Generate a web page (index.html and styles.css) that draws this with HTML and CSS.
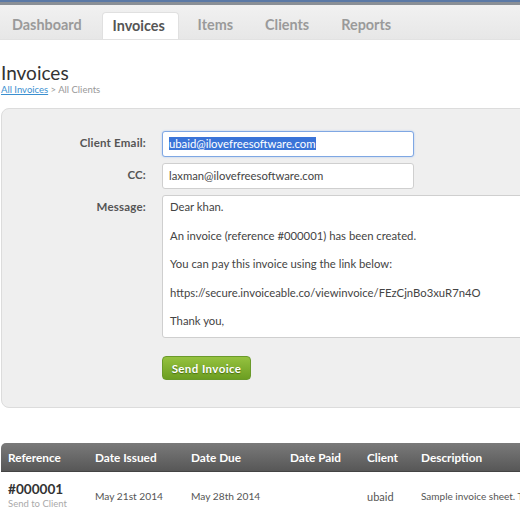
FILE: index.html
```html
<!DOCTYPE html>
<html>
<head>
<meta charset="utf-8">
<link rel="stylesheet" href="styles.css">
</head>
<body>
<div class="topline"></div>
<nav class="tabs">
  <a class="tab">Dashboard</a>
  <a class="tab active">Invoices</a>
  <a class="tab">Items</a>
  <a class="tab">Clients</a>
  <a class="tab">Reports</a>
</nav>
<main class="content">
  <h1 class="title">Invoices</h1>
  <div class="crumbs"><a class="crumb-link">All Invoices</a> &gt; All Clients</div>
  <section class="panel">
    <div class="row">
      <label class="lbl">Client Email:</label>
      <div class="field focus"><span class="sel">ubaid@ilovefreesoftware.com</span></div>
    </div>
    <div class="row">
      <label class="lbl">CC:</label>
      <div class="field">laxman@ilovefreesoftware.com</div>
    </div>
    <div class="row">
      <label class="lbl">Message:</label>
      <div class="textarea">
        <p>Dear khan.</p>
        <p>An invoice (reference #000001) has been created.</p>
        <p>You can pay this invoice using the link below:</p>
        <p>https://secure.invoiceable.co/viewinvoice/FEzCjnBo3xuR7n4O</p>
        <p>Thank you,</p>
      </div>
    </div>
    <div class="row">
      <span class="lbl"></span>
      <button class="btn">Send Invoice</button>
    </div>
  </section>
  <div class="tablewrap">
  <table class="grid">
    <thead>
      <tr>
        <th class="c1">Reference</th>
        <th class="c2">Date Issued</th>
        <th class="c3">Date Due</th>
        <th class="c4">Date Paid</th>
        <th class="c5">Client</th>
        <th class="c6">Description</th>
      </tr>
    </thead>
    <tbody>
      <tr>
        <td class="c1"><div class="ref">#000001</div><div class="sub">Send to Client</div></td>
        <td class="c2 date">May 21st 2014</td>
        <td class="c3 date">May 28th 2014</td>
        <td class="c4"></td>
        <td class="c5">ubaid</td>
        <td class="c6 desc">Sample invoice sheet. T</td>
      </tr>
    </tbody>
  </table>
  </div>
</main>
</body>
</html>
```
FILE: styles.css
```css
html, body {
  margin: 0;
  padding: 0;
  background: #fff;
  font-family: Lato, "Open Sans", sans-serif;
  overflow: hidden;
}
.topline {
  height: 2px;
  background: #5b79a6;
  border-bottom: 3px solid #8a8f96;
}
.tabs {
  display: flex;
  height: 35px;
  background: linear-gradient(#f1f1f1, #e7e7e7);
  border-bottom: 1px solid #e2e2e2;
  align-items: flex-end;
  box-sizing: border-box;
}
.tab {
  font-size: 14.4px;
  font-weight: bold;
  color: #9a9a9a;
  padding: 0 12px;
  height: 27px;
  line-height: 26px;
  margin-right: 8px;
  box-sizing: border-box;
}
.tab:first-child { margin-right: 0; }
.tab.active {
  background: #fff;
  color: #555;
  border: 1px solid #e0e0e0;
  border-bottom: none;
  border-radius: 4px 4px 0 0;
  padding: 0 10px;
  width: 77px;
  margin-left: 8px;
  margin-right: 7px;
}
.content {
  padding: 0 0 0 1px;
}
.title {
  margin: 21px 0 0 0;
  font-size: 19px;
  font-weight: normal;
  color: #333;
  line-height: 23px;
}
.crumbs {
  font-size: 9.5px;
  color: #999;
  line-height: 12px;
}
.crumb-link {
  color: #3a8fd0;
  text-decoration: underline;
}
.panel {
  margin-top: 12px;
  width: 560px;
  background: #efefef;
  border: 1px solid #dcdcdc;
  border-radius: 8px;
  padding: 22px 0 26px 0;
  box-sizing: border-box;
  height: 300px;
}
.row {
  display: flex;
  align-items: flex-start;
  margin-bottom: 6px;
}
.lbl {
  width: 144px;
  text-align: right;
  font-size: 11.5px;
  font-weight: bold;
  letter-spacing: 0.2px;
  color: #555;
  padding-top: 5px;
  margin-right: 16px;
  flex: none;
}
.field {
  width: 252px;
  height: 26px;
  box-sizing: border-box;
  background: #fff;
  border: 1px solid #cfcfcf;
  border-radius: 3px;
  font-size: 11.3px;
  color: #444;
  line-height: 24px;
  padding-left: 6px;
}
.field.focus {
  border-color: #7fa7e3;
  box-shadow: 0 0 2px #a9c6f0;
}
.sel {
  background: #3a74d8;
  color: #fff;
}
.textarea {
  width: 400px;
  height: 143px;
  box-sizing: border-box;
  background: #fff;
  border: 1px solid #cfcfcf;
  border-radius: 3px;
  font-size: 11.3px;
  color: #444;
  padding: 3px 7px;
}
.textarea p {
  margin: 0 0 13.5px 0;
  line-height: 15px;
}
.btn {
  margin-top: 12px;
  width: 89px;
  height: 24px;
  border: 1px solid #6a9a2a;
  border-radius: 4px;
  background: linear-gradient(#95c23f, #6c9e22);
  color: #fff;
  font-family: Lato, sans-serif;
  font-weight: bold;
  font-size: 11.5px;
  letter-spacing: 0.4px;
  text-shadow: 0 1px 1px #4a6e14;
  padding: 0;
}
.tablewrap {
  margin-top: 35px;
  width: 519px;
  overflow: hidden;
}
.grid {
  width: 560px;
  border-collapse: separate;
  border-spacing: 0;
  font-size: 11px;
}
.grid th {
  height: 28px;
  background: linear-gradient(#7a7a7a, #575757);
  color: #fff;
  text-align: left;
  font-weight: bold;
  font-size: 11.8px;
  padding: 0;
  border-bottom: 1px solid #444;
}
.grid th.c1 { border-top-left-radius: 5px; padding-left: 7px; }
.grid td {
  padding: 0;
  color: #555;
  height: 48px;
  vertical-align: middle;
}
.grid td.c1 { padding-left: 7px; }
.c1 { width: 87px; }
.c2 { width: 96px; }
.c3 { width: 99px; }
.c4 { width: 77px; }
.c5 { width: 54px; }
.ref {
  font-size: 13.6px;
  font-weight: bold;
  color: #333;
  line-height: 16px;
}
.sub {
  font-size: 9.5px;
  color: #aaa;
  line-height: 14px;
}
.date {
  font-size: 10.2px;
}
.desc {
  color: #aaa;
  font-size: 10px;
  white-space: nowrap;
}
```
